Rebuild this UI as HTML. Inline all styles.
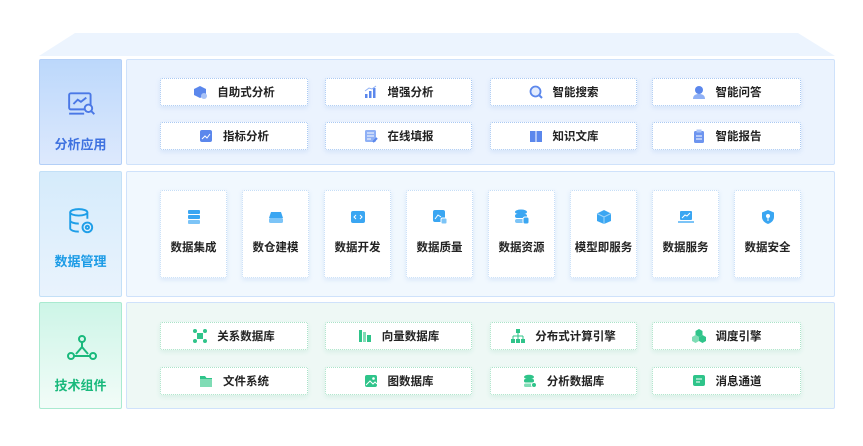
<!DOCTYPE html>
<html><head><meta charset="utf-8"><style>
*{margin:0;padding:0;box-sizing:border-box}
body{width:863px;height:446px;background:#fff;position:relative;overflow:hidden;font-family:"Liberation Sans","Noto Sans CJK SC",sans-serif}
.a{position:absolute}
.lab{position:absolute;left:39px;width:83px;border-radius:2px;text-align:center;font-weight:700;font-size:13px}
.lab .t{position:absolute;left:0;right:0}
.pan{position:absolute;left:126px;width:709px;border:1px solid #cfe2fb;border-radius:2px}
.card{position:absolute;background:#fff;border:1px dotted #a9c9f3;border-radius:2px;box-shadow:0 2px 5px rgba(90,140,220,.15);font-size:11.5px;color:#222;font-weight:700;display:flex;align-items:center;justify-content:center}
.card svg{margin-right:10px}
.g{border-color:#a9e3c8;box-shadow:0 2px 5px rgba(60,180,130,.12)}
.sq{flex-direction:column;justify-content:flex-start;padding-top:18px;border-color:#c6def7}
.sq svg{margin:0 0 14px 0}
</style></head><body>
<svg class="a" style="left:0;top:0" width="863" height="60"><polygon points="75,33 798,33 835,56 39,56" fill="#ecf4fe"/></svg>

<div class="lab" style="top:59px;height:106px;background:linear-gradient(#bcd8fb,#dde9fd);border:1px solid #b3cff7;color:#3f72e0">
<svg class="a" style="left:27px;top:31px" width="30" height="26" viewBox="0 0 28 24" fill="none" stroke="#4a78e6" stroke-width="1.8"><rect x="2" y="2" width="20" height="15" rx="1.5"/><path d="M2 21h14"/><path d="M6 12l4-4 3 2 5-4"/><circle cx="20" cy="16" r="3.5" fill="#d6e5fd"/><path d="M22.5 18.5l3 3"/></svg>
<div class="t" style="top:74px">分析应用</div></div>
<div class="pan" style="top:59px;height:106px;background:#ebf3fe"></div>

<div class="lab" style="top:171px;height:126px;background:linear-gradient(#d5ebfb,#e9f3fd);border:1px solid #c3e0f7;color:#1b9be6">
<svg class="a" style="left:27px;top:35px" width="30" height="30" viewBox="0 0 28 28" fill="none" stroke="#1e9ee8" stroke-width="1.8"><ellipse cx="11" cy="5" rx="8" ry="3"/><path d="M3 5v15c0 1.7 3.6 3 8 3M3 12.5c0 1.7 3.6 3 8 3M19 5v6"/><circle cx="19" cy="19" r="4.5"/><circle cx="19" cy="19" r="1.5"/></svg>
<div class="t" style="top:79px">数据管理</div></div>
<div class="pan" style="top:171px;height:126px;background:#f1f8fe"></div>

<div class="lab" style="top:302px;height:107px;background:linear-gradient(#cdf5e7,#f2fcf8);border:1px solid #a9ead0;color:#19b97c">
<svg class="a" style="left:27px;top:32px" width="30" height="26" viewBox="0 0 30 26" fill="none" stroke="#19b97c" stroke-width="2"><circle cx="15" cy="4" r="3"/><circle cx="4" cy="21" r="3"/><circle cx="26" cy="21" r="3"/><path d="M15 7v5l-6 7M15 12l6 7M7 21h16"/></svg>
<div class="t" style="top:72px">技术组件</div></div>
<div class="pan" style="top:302px;height:107px;background:#eef8f5"></div>

<!-- row1 -->
<div class="card" style="left:160px;top:78px;width:148px;height:28px"><svg width="14" height="14"><path d="M7 1l6 3v6l-6 3-6-3V4z" fill="#5b87ec"/><circle cx="11" cy="11" r="3" fill="#a9c3f7"/></svg>自助式分析</div>
<div class="card" style="left:325px;top:78px;width:147px;height:28px"><svg width="14" height="14"><rect x="1" y="9" width="2.5" height="4" fill="#5b87ec"/><rect x="5" y="6" width="2.5" height="7" fill="#5b87ec"/><rect x="9" y="3" width="2.5" height="10" fill="#5b87ec"/><path d="M1 6l4-3 3 1 4-3" stroke="#8fb0f5" fill="none"/></svg>增强分析</div>
<div class="card" style="left:490px;top:78px;width:147px;height:28px"><svg width="14" height="14"><circle cx="6.5" cy="6.5" r="5" stroke="#5b87ec" stroke-width="1.8" fill="#e3ecfd"/><path d="M10 10l3 3" stroke="#5b87ec" stroke-width="2"/></svg>智能搜索</div>
<div class="card" style="left:652px;top:78px;width:149px;height:28px"><svg width="14" height="14"><circle cx="7" cy="5" r="4" fill="#5b87ec"/><path d="M1 14c0-4 3-5 6-5s6 1 6 5z" fill="#8fb0f5"/></svg>智能问答</div>
<div class="card" style="left:160px;top:122px;width:148px;height:28px"><svg width="14" height="14"><rect x="1" y="1" width="12" height="12" rx="2" fill="#5b87ec"/><path d="M3 10l3-3 2 2 3-4" stroke="#fff" fill="none"/></svg>指标分析</div>
<div class="card" style="left:325px;top:122px;width:147px;height:28px"><svg width="14" height="14"><rect x="1" y="1" width="11" height="12" rx="1.5" fill="#8fb0f5"/><path d="M3 4h7M3 7h7M3 10h4" stroke="#fff"/><path d="M9 13l4-4" stroke="#5b87ec" stroke-width="2"/></svg>在线填报</div>
<div class="card" style="left:490px;top:122px;width:147px;height:28px"><svg width="14" height="14"><path d="M1 2h5.5v11H1zM7.5 2H13v11H7.5z" fill="#5b87ec"/></svg>知识文库</div>
<div class="card" style="left:652px;top:122px;width:149px;height:28px"><svg width="14" height="14"><rect x="2" y="2" width="10" height="12" rx="1.5" fill="#6d94ef"/><rect x="4.5" y="0.5" width="5" height="3" fill="#a9c3f7"/><path d="M4 7h6M4 10h6" stroke="#fff"/></svg>智能报告</div>

<!-- row2 -->
<div class="card sq" style="left:160px;top:190px;width:67px;height:88px"><svg width="16" height="16"><rect x="2" y="1" width="12" height="4" rx="1" fill="#3aa6f2"/><rect x="2" y="6" width="12" height="4" rx="1" fill="#3aa6f2"/><rect x="2" y="11" width="12" height="4" rx="1" fill="#7cc4f7"/></svg>数据集成</div>
<div class="card sq" style="left:242px;top:190px;width:67px;height:88px"><svg width="16" height="16"><path d="M3 3h10l2 6H1z" fill="#3aa6f2"/><rect x="1" y="9" width="14" height="5" rx="1.5" fill="#7cc4f7"/></svg>数仓建模</div>
<div class="card sq" style="left:324px;top:190px;width:67px;height:88px"><svg width="16" height="16"><rect x="1" y="2" width="14" height="12" rx="2" fill="#3aa6f2"/><path d="M6 6l-2 2 2 2M10 6l2 2-2 2" stroke="#fff" fill="none"/></svg>数据开发</div>
<div class="card sq" style="left:406px;top:190px;width:67px;height:88px"><svg width="16" height="16"><rect x="1" y="1" width="12" height="12" rx="2" fill="#3aa6f2"/><path d="M3 10l3-4 3 2" stroke="#fff" fill="none"/><rect x="9" y="9" width="6" height="6" rx="1.5" fill="#7cc4f7" stroke="#fff"/></svg>数据质量</div>
<div class="card sq" style="left:488px;top:190px;width:67px;height:88px"><svg width="16" height="16"><ellipse cx="7" cy="3" rx="6" ry="2.5" fill="#3aa6f2"/><rect x="1" y="5" width="12" height="4" rx="2" fill="#3aa6f2"/><rect x="1" y="10" width="12" height="4" rx="2" fill="#7cc4f7"/><rect x="9" y="8" width="6" height="7" rx="2" fill="#3aa6f2" stroke="#fff"/></svg>数据资源</div>
<div class="card sq" style="left:570px;top:190px;width:67px;height:88px"><svg width="16" height="16"><path d="M8 1l7 3.5v7.5L8 15 1 12V4.5z" fill="#3aa6f2"/><path d="M1 4.5L8 8l7-3.5M8 8v7" stroke="#9fd5fa" fill="none"/></svg>模型即服务</div>
<div class="card sq" style="left:652px;top:190px;width:67px;height:88px"><svg width="16" height="16"><rect x="2" y="2" width="12" height="9" rx="1" fill="#3aa6f2"/><path d="M4 9l3-3 2 1 3-3" stroke="#fff" fill="none"/><rect x="0" y="12" width="16" height="2" fill="#7cc4f7"/></svg>数据服务</div>
<div class="card sq" style="left:734px;top:190px;width:67px;height:88px"><svg width="16" height="16"><path d="M8 1l6 2.5V8c0 3.5-3 6-6 7-3-1-6-3.5-6-7V3.5z" fill="#3aa6f2"/><circle cx="8" cy="7" r="2" fill="#fff"/><path d="M8 9v3" stroke="#fff"/></svg>数据安全</div>

<!-- row3 -->
<div class="card g" style="left:160px;top:322px;width:148px;height:28px"><svg width="14" height="14"><rect x="4" y="4" width="6" height="6" fill="#2fc48a"/><circle cx="2" cy="2" r="2" fill="#2fc48a"/><circle cx="12" cy="2" r="2" fill="#2fc48a"/><circle cx="2" cy="12" r="2" fill="#2fc48a"/><circle cx="12" cy="12" r="2" fill="#2fc48a"/></svg>关系数据库</div>
<div class="card g" style="left:325px;top:322px;width:147px;height:28px"><svg width="14" height="14"><rect x="1" y="1" width="3" height="12" fill="#2fc48a"/><rect x="5" y="3" width="3" height="10" fill="#7fdcb5"/><rect x="9" y="6" width="4" height="7" fill="#2fc48a"/></svg>向量数据库</div>
<div class="card g" style="left:490px;top:322px;width:147px;height:28px"><svg width="14" height="14"><rect x="5" y="0" width="4" height="4" fill="#2fc48a"/><path d="M7 4v3M2 7h10M2 7v3M7 7v3M12 7v3" stroke="#2fc48a"/><rect x="0" y="10" width="4" height="4" fill="#2fc48a"/><rect x="5" y="10" width="4" height="4" fill="#2fc48a"/><rect x="10" y="10" width="4" height="4" fill="#2fc48a"/></svg>分布式计算引擎</div>
<div class="card g" style="left:652px;top:322px;width:149px;height:28px"><svg width="14" height="14"><path d="M7 0l3.5 2v4L7 8 3.5 6V2z" fill="#2fc48a"/><path d="M3.5 6l3.5 2v4l-3.5 2L0 12V8z" fill="#7fdcb5"/><path d="M10.5 6l3.5 2v4l-3.5 2L7 12V8z" fill="#2fc48a"/></svg>调度引擎</div>
<div class="card g" style="left:160px;top:367px;width:148px;height:28px"><svg width="14" height="14"><path d="M1 2h5l1.5 2H13v9H1z" fill="#2fc48a"/><rect x="1" y="5" width="12" height="8" fill="#7fdcb5"/></svg>文件系统</div>
<div class="card g" style="left:325px;top:367px;width:147px;height:28px"><svg width="14" height="14"><rect x="1" y="1" width="12" height="12" rx="2" fill="#2fc48a"/><path d="M2 11l4-4 3 3 2-2 2 2" stroke="#fff" fill="none"/><circle cx="9.5" cy="4.5" r="1.3" fill="#fff"/></svg>图数据库</div>
<div class="card g" style="left:490px;top:367px;width:147px;height:28px"><svg width="14" height="14"><ellipse cx="6" cy="3" rx="5" ry="2.3" fill="#2fc48a"/><rect x="1" y="5" width="10" height="3.5" rx="1.5" fill="#2fc48a"/><rect x="1" y="9.5" width="10" height="3.5" rx="1.5" fill="#7fdcb5"/><circle cx="11" cy="11" r="2.5" fill="#2fc48a" stroke="#fff"/></svg>分析数据库</div>
<div class="card g" style="left:652px;top:367px;width:149px;height:28px"><svg width="14" height="14"><rect x="1" y="1" width="12" height="11" rx="2" fill="#2fc48a"/><path d="M4 5h6M4 8h4" stroke="#fff"/></svg>消息通道</div>
</body></html>
